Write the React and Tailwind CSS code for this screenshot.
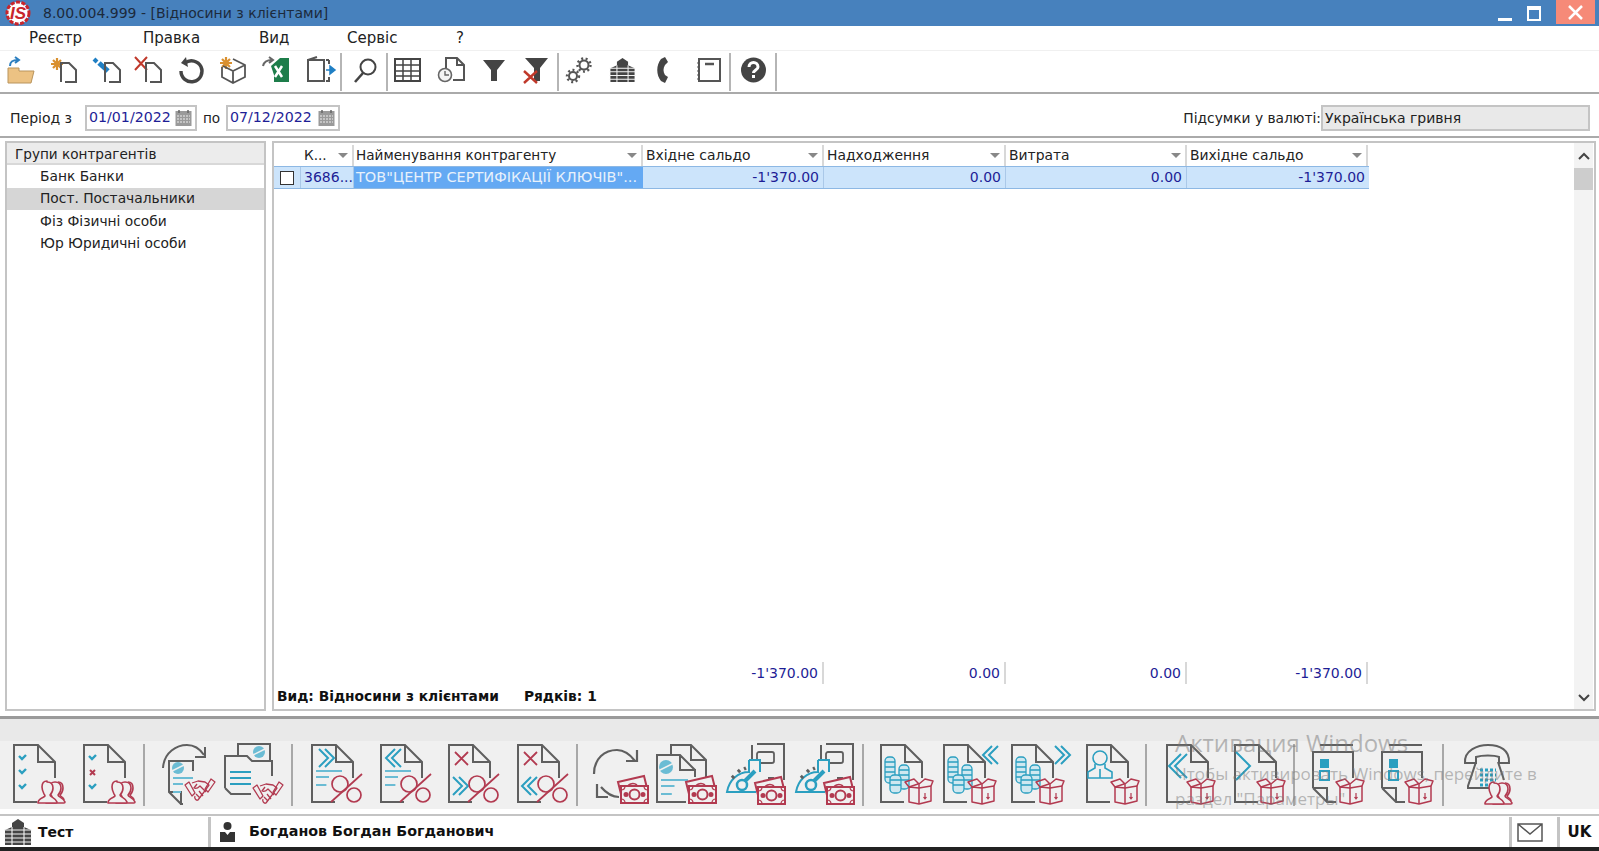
import React from 'react';

const G = '#5f5f5f';
const R = '#b23a50';
const B = '#2b9fc0';
const L = '#6bbcd4';

// shared svg pieces, drawn in pixels
const At = ({ x = 0, y = 0, children }) => <g transform={`translate(${x} ${y})`}>{children}</g>;

const Doc = ({ x, y }) => (
  <At x={x} y={y}>
    <path d="M24 58H1V1H25L42 18V34M25 1V18H42" fill="none" stroke={G} strokeWidth="2" />
  </At>
);

const Users = ({ x, y }) => (
  <At x={x} y={y}>
    <g fill="#f0f0f0" stroke={R} strokeWidth="1.600" strokeLinejoin="round">
      <path d="M20 1c3 0 5 2 5 6 0 3-1 5-3 7 0 2 4 2 4 5" />
      <path d="M17 1c4 0 6 2 6 6 0 3-1 5-3 7 0 2 6 3 7 7 0 1 0 1-1 1H8c0-4 5-5 6-6 0-1 0-1-1-2-1-2-2-5-2-7 0-4 3-6 6-6z" />
      <path d="M9 1c4 0 6 2 6 6 0 3-1 5-3 7 0 2 6 3 7 7 0 1 0 1-1 1H0c0-1 0-1 0-1 1-4 7-5 7-6 0-1 0-1-1-2-1-2-2-5-2-7 0-4 2-6 5-6z" />
    </g>
  </At>
);

const Tick = ({ x, y }) => <path d={`M${x} ${y}l3 3l4-4`} fill="none" stroke={B} strokeWidth="2.400" />;

const Box = ({ x, y }) => (
  <At x={x} y={y}>
    <g fill="none" stroke={R} strokeWidth="1.500" strokeLinejoin="round">
      <path d="M5 9V24L15 26L27 23V8L15 10Z" />
      <path d="M15 10V26M5 9L1 4L10 1L15 6L21 1L29 3L27 8M15 6L15 10M5 9L14 6" />
      <path d="M21 15v6M19.500 19l1.500 2l1.500-2" strokeWidth="1.200" />
    </g>
  </At>
);

const Money = ({ x, y }) => (
  <At x={x} y={y}>
    <g fill="#f0f0f0" stroke={R} strokeWidth="2">
      <path d="M0 6L26 0L29 12L3 18Z" />
      <path d="M9 13C9 8 15 6 19 9" fill="none" strokeWidth="1.600" />
      <rect x="3" y="10" width="27" height="17" />
      <circle cx="16.500" cy="18.500" r="5" />
      <circle cx="8" cy="18.500" r="1.500" fill={R} />
      <circle cx="25" cy="18.500" r="1.500" fill={R} />
      <path d="M3 14C5 14 7 13 7 10M30 14C28 14 26 13 26 10M3 23C5 23 7 24 7 27M30 23C28 23 26 24 26 27" fill="none" strokeWidth="1.200" />
    </g>
  </At>
);

const Hands = ({ x, y }) => (
  <At x={x} y={y}>
    <g fill="none" stroke={R} strokeWidth="1.300" strokeLinejoin="round">
      <path d="M0 8L7 19L10 16L4 5Z" />
      <path d="M26 2L20 12L23 15L30 5Z" />
      <path d="M7 6L13 4L20 5L24 8L19 15L13 23C11 24 9 21 10 19" />
      <path d="M12 7L9 11C11 12 13 11 15 9L21 15M11 17L15 21M14 14L18 19" />
    </g>
  </At>
);

const Percent = ({ x, y }) => (
  <At x={x} y={y}>
    <g fill="none" stroke={R} strokeWidth="1.700">
      <path d="M0 28L31 0" />
      <circle cx="9" cy="10" r="8" />
      <circle cx="23" cy="21" r="7" />
    </g>
  </At>
);

const TextLines = ({ x, y, w = 26 }) => (
  <At x={x} y={y}>
    <path d={`M0 1H${w}M0 7H${w / 2}M0 15H${w / 2.500}`} stroke={L} strokeWidth="2" fill="none" />
  </At>
);

const Chev = ({ x, y, left, double, h = 18, c = B }) => {
  const w = h / 2;
  const one = (o) => (left ? `M${o + w} 0L${o} ${h / 2}L${o + w} ${h}` : `M${o} 0L${o + w} ${h / 2}L${o} ${h}`);
  return (
    <At x={x} y={y}>
      <path d={one(0) + (double ? one(6) : '')} fill="none" stroke={c} strokeWidth="2" />
    </At>
  );
};

const Cross = ({ x, y }) => <path d={`M${x} ${y}l13 13M${x + 13} ${y}l-13 13`} stroke={R} strokeWidth="1.800" fill="none" />;

const Globe = ({ x, y, r = 6 }) => (
  <At x={x} y={y}>
    <circle r={r} fill={L} />
    <path d={`M${-r} ${r / 2}L${r} ${-r / 2}`} stroke="#f0f0f0" strokeWidth="1.500" />
  </At>
);

const Coins = ({ x, y }) => (
  <At x={x} y={y}>
    <g fill="#cfe8f0" stroke={B} strokeWidth="1.300">
      <rect x="0" y="0" width="10" height="26" rx="4" />
      <path d="M0 5h10M0 10h10M0 15h10M0 20h10" />
      <rect x="14" y="8" width="10" height="24" rx="4" />
      <path d="M14 13h10M14 18h10M14 23h10" />
      <rect x="5" y="18" width="11" height="18" rx="4" />
      <path d="M5 23h11M5 28h11" />
    </g>
  </At>
);

const Register = ({ x, y }) => (
  <At x={x} y={y}>
    <path d="M26 1V16M31 0H58V36M42 34H48" fill="none" stroke={G} strokeWidth="2" />
    <rect x="31" y="8" width="17" height="11" rx="2" fill="none" stroke={G} strokeWidth="1.800" />
    <path d="M23 16H34V28M23 16V28C12 28 3 36 1 48H30" fill="#f0f0f0" stroke={B} strokeWidth="2" />
    <circle cx="16" cy="41" r="5" fill="none" stroke={B} strokeWidth="2.500" />
    <path d="M19 37L29 27" stroke={B} strokeWidth="4" />
    <path d="M6 34l2-2M12 28l2-2M18 25l2-1" stroke={G} strokeWidth="3.400" />
  </At>
);

// bottom toolbar buttons, each one is w x 60 px
const Btn = ({ className, children }) => (
  <svg className={`h-[60px] shrink-0 overflow-visible ${className}`}>{children}</svg>
);

const BtnSep = ({ className }) => <div className={`w-[2px] h-[62px] bg-[#a8a8a8] shrink-0 ${className}`} />;

const BottomIcons = () => (
  <div className="flex items-start pl-[13px] pt-[3px] h-[68px] bg-[#f0f0f0]">
    <Btn className="w-[70px]">
      <Doc /><Tick x={6} y={12} /><Tick x={6} y={26} /><Tick x={6} y={41} /><Users x={25} y={37} />
    </Btn>
    <Btn className="w-[60px]">
      <Doc /><Tick x={6} y={12} /><path d="M7 26l5 5M12 26l-5 5" stroke={R} strokeWidth="2" /><Tick x={6} y={41} /><Users x={25} y={37} />
    </Btn>
    <BtnSep className="mr-[16px]" />
    <Btn className="w-[62px]">
      <path d="M2 24C3 8 16 1 26 1C34 1 39 5 43 11M44 3V13H34" fill="none" stroke={G} strokeWidth="2" />
      <path d="M20 60L8 48V17H32V27M8 48H20V60H22" fill="none" stroke={G} strokeWidth="2" />
      <Globe x={17} y={24} /><TextLines x={12} y={33} w={20} /><Hands x={24} y={33} />
    </Btn>
    <Btn className="w-[68px]">
      <path d="M15 12V0H47V16M2 44V12H24L29 17H49V32M2 44L8 50H28" fill="none" stroke={G} strokeWidth="2" />
      <Globe x={36} y={8} />
      <path d="M7 28H28M7 34H28M7 40H28" stroke={B} strokeWidth="2" />
      <Hands x={30} y={36} />
    </Btn>
    <BtnSep className="mr-[18px]" />
    <Btn className="w-[69px]">
      <Doc /><Chev x={8} y={5} double /><TextLines x={5} y={26} /><Percent x={20} y={30} />
    </Btn>
    <Btn className="w-[68px]">
      <Doc /><Chev x={6} y={5} left double /><TextLines x={5} y={26} /><Percent x={20} y={30} />
    </Btn>
    <Btn className="w-[69px]">
      <Doc /><Cross x={7} y={8} /><Chev x={5} y={33} double /><Percent x={20} y={30} />
    </Btn>
    <Btn className="w-[59px]">
      <Doc /><Cross x={7} y={8} /><Chev x={5} y={33} left double /><Percent x={20} y={30} />
    </Btn>
    <BtnSep className="mr-[15px]" />
    <Btn className="w-[63px]">
      <path d="M1 30C1 14 12 6 24 6C30 6 36 9 42 17M44 6V17H33M26 53C20 53 14 50 8 43M4 40V53H15" fill="none" stroke={G} strokeWidth="2.200" />
      <Money x={25} y={32} />
    </Btn>
    <Btn className="w-[69px]">
      <path d="M15 10V1H35L50 16V34M35 1V16H50" fill="none" stroke={G} strokeWidth="2" />
      <path d="M30 58H1V11H24L39 26M24 11V26H39V33" fill="#f0f0f0" stroke={G} strokeWidth="2" />
      <Globe x={10} y={23} r={7} /><TextLines x={5} y={35} w={27} /><Money x={30} y={32} />
    </Btn>
    <Btn className="w-[69px]">
      <Register x={1} y={0} /><Money x={30} y={33} />
    </Btn>
    <Btn className="w-[68px]">
      <Register x={1} y={0} /><Money x={30} y={33} />
    </Btn>
    <BtnSep className="mr-[16px]" />
    <Btn className="w-[63px]">
      <Doc /><Coins x={5} y={13} /><Box x={24} y={34} />
    </Btn>
    <Btn className="w-[68px]">
      <Doc /><Coins x={5} y={13} /><Chev x={40} y={2} left double /><Box x={24} y={34} />
    </Btn>
    <Btn className="w-[75px]">
      <Doc /><Coins x={5} y={13} /><Chev x={44} y={2} double /><Box x={24} y={34} />
    </Btn>
    <Btn className="w-[59px]">
      <Doc />
      <g fill="none" stroke={B} strokeWidth="1.600">
        <circle cx="14" cy="14" r="7" />
        <path d="M9 20V24L2 28V34H26V28L19 24V20M14 25V34" />
      </g>
      <Box x={24} y={34} />
    </Btn>
    <BtnSep className="mr-[19px]" />
    <Btn className="w-[68px]">
      <Doc /><Chev x={3} y={10} left double h={24} /><Box x={20} y={34} />
    </Btn>
    <Btn className="w-[59px]">
      <Doc /><Chev x={2} y={8} h={28} /><Box x={22} y={34} />
    </Btn>
    <BtnSep className="mr-[17px]" />
    <Btn className="w-[69px]">
      <path d="M1 44L15 58H24M1 44V8H41V34M1 44H15V58M8 1H41" fill="none" stroke={G} strokeWidth="2" />
      <rect x="8" y="15" width="9" height="9" fill={B} /><rect x="8" y="27" width="9" height="9" fill="none" stroke={B} strokeWidth="2" />
      <Box x={23} y={34} />
    </Btn>
    <Btn className="w-[61px]">
      <path d="M1 44L15 58H24M1 44V8H41V34M1 44H15V58M8 1H41" fill="none" stroke={G} strokeWidth="2" />
      <rect x="8" y="15" width="9" height="9" fill={B} /><rect x="8" y="27" width="9" height="9" fill="none" stroke={B} strokeWidth="2" />
      <Box x={23} y={34} />
    </Btn>
    <BtnSep className="mr-[20px]" />
    <Btn className="w-[56px]">
      <path d="M1 19C0 6 14 1 24 1C36 1 46 6 45 19H35V13C30 11 18 11 12 13V19Z" fill="none" stroke={G} strokeWidth="2" />
      <path d="M12 18L4 42V44H30M34 18L40 36" fill="none" stroke={G} strokeWidth="2" />
      <path d="M16 26h16M16 31h16M16 36h16M16 41h12" stroke={B} strokeWidth="3" strokeDasharray="3 2" />
      <Users x={21} y={38} />
    </Btn>
  </div>
);

// top toolbar
const Top = ({ className, children }) => (
  <svg className={`h-[26px] shrink-0 overflow-visible ${className}`}>{children}</svg>
);
const TopSep = ({ className }) => <div className={`w-[2px] h-[38px] -mt-[4px] bg-[#b5b5b5] shrink-0 ${className}`} />;

const PageSmall = ({ x, y }) => (
  <path transform={`translate(${x} ${y})`} d="M1 20V1H9L16 8V20H5" fill="none" stroke="#555" strokeWidth="2" />
);

const Star = ({ x, y }) => (
  <g transform={`translate(${x} ${y})`} stroke="#d9902f" strokeWidth="2.200">
    <path d="M0-6V6M-6 0H6M-4-4L4 4M4-4L-4 4" />
  </g>
);

const Gear = ({ x, y, r }) => (
  <g transform={`translate(${x} ${y})`}>
    <circle r={r} fill="none" stroke="#555" strokeWidth="2" />
    <circle r={r + 2} fill="none" stroke="#555" strokeWidth="2.400" strokeDasharray="2 2.500" />
  </g>
);

const Building = ({ className }) => (
  <svg className={className} viewBox="0 0 28 28">
    <path d="M14 1L20 5V9L27 12V27H1V12L8 9V5Z" fill="#444" />
    <path d="M0 12H28M0 16H28M0 20H28M0 24H28M8 9V27M20 9V27" stroke="#f4f4f4" strokeWidth="1.100" />
  </svg>
);

const TopIcons = () => (
  <div className="flex items-start pl-[7px] pt-[6px] h-[41px]">
    <Top className="w-[43px]">
      <path d="M1 11H12V14H27L24 26H1Z" fill="#ecc283" stroke="#b9945c" strokeWidth="1" />
      <path d="M3 9C3 4 6 3 11 3M8 0L12 3L8 6" fill="none" stroke="#2c7fc0" strokeWidth="2" />
    </Top>
    <Top className="w-[43px]"><Star x={7} y={7} /><PageSmall x={10} y={5} /></Top>
    <Top className="w-[41px]">
      <path d="M1 2L4 5" stroke="#1f7fc4" strokeWidth="4" />
      <path d="M6 6L15 14" stroke="#1f7fc4" strokeWidth="5" /><PageSmall x={11} y={5} />
    </Top>
    <Top className="w-[44px]">
      <path d="M1 0L13 13M13 0L1 13" stroke="#c0392b" strokeWidth="2" /><PageSmall x={11} y={5} />
    </Top>
    <Top className="w-[42px]">
      <path d="M7 6A10.500 10.500 0 1 1 3 14" fill="none" stroke="#444" strokeWidth="3.400" />
      <path d="M8 0L3 6L10 10Z" fill="#444" />
    </Top>
    <Top className="w-[42px]">
      <Star x={6} y={6} />
      <path d="M13 2L25 8V20L13 26L2 20V10M13 14L25 8M13 14V26M13 14L3 9" fill="none" stroke="#555" strokeWidth="1.800" />
    </Top>
    <Top className="w-[45px]">
      <path d="M1 9C2 4 6 3 10 3M7 0L11 3L7 6" fill="none" stroke="#666" strokeWidth="2" />
      <path d="M9 9L18 1H27V25H12V18Z" fill="#1d7d4a" />
      <path d="M13 9L20 20M20 9L13 20" stroke="#fff" strokeWidth="2.500" />
    </Top>
    <Top className="w-[33px]">
      <path d="M1 3H17V24H1ZM1 3L10 0M19 3H22M19 24H22V20M22 3V7" fill="none" stroke="#555" strokeWidth="2" />
      <path d="M19 13H25M23 9L28 13L23 17Z" fill="#1f7fc4" stroke="#1f7fc4" strokeWidth="1.500" />
    </Top>
    <TopSep className="mr-[11px]" />
    <Top className="w-[33px]">
      <circle cx="15" cy="10" r="7.500" fill="none" stroke="#444" strokeWidth="2" />
      <path d="M10 16L2 25" stroke="#444" strokeWidth="2.600" />
    </Top>
    <TopSep className="mr-[6px]" />
    <Top className="w-[43px]">
      <rect x="1" y="2" width="25" height="22" fill="none" stroke="#444" strokeWidth="2" />
      <path d="M1 8H26M1 14H26M1 19H26M9 2V24M17 2V24" stroke="#444" strokeWidth="1.500" />
    </Top>
    <Top className="w-[46px]">
      <path d="M9 11V1H20L27 8V23H16M20 1V8H27" fill="none" stroke="#555" strokeWidth="2" />
      <circle cx="8" cy="18" r="6.500" fill="#f4f4f4" stroke="#666" strokeWidth="1.600" />
      <path d="M8 14V18H12" fill="none" stroke="#666" strokeWidth="1.400" />
    </Top>
    <Top className="w-[40px]"><path d="M0 3H22L14 13V24H8V13Z" fill="#444" /></Top>
    <Top className="w-[34px]">
      <path d="M2 1H25L17 11V24H11V11Z" fill="#444" />
      <path d="M1 14L14 26M14 14L1 26" stroke="#c0392b" strokeWidth="2.400" />
    </Top>
    <TopSep className="mr-[7px]" />
    <Top className="w-[42px]"><Gear x={18} y={8} r={4.500} /><Gear x={7} y={19} r={4} /></Top>
    <Building className="w-[29px] h-[26px] shrink-0 mr-[19px]" />
    <Top className="w-[41px]">
      <path d="M9 0L5 2C0 8 0 18 5 24L9 26L12 20L9 18C7 15 7 11 9 8L12 5Z" fill="#444" />
    </Top>
    <Top className="w-[32px]">
      <rect x="2" y="2" width="21" height="22" fill="none" stroke="#555" strokeWidth="2" />
      <path d="M8 7H17" stroke="#555" strokeWidth="2.500" />
      <path d="M0 6H3M0 10H3M0 14H3M0 18H3M0 22H3" stroke="#555" strokeWidth="1" />
    </Top>
    <TopSep className="mr-[10px]" />
    <Top className="w-[34px]">
      <circle cx="12.500" cy="13" r="12.500" fill="#444" />
      <path d="M8 10C8 4 17 4 17 10C17 13 12.500 13 12.500 16" fill="none" stroke="#fff" strokeWidth="3" />
      <rect x="11" y="18" width="3" height="3" fill="#fff" />
    </Top>
    <TopSep />
  </div>
);

const Calendar = () => (
  <svg className="w-[17px] h-[17px] shrink-0" viewBox="0 0 17 17">
    <rect x="0.500" y="1" width="16" height="15" fill="#9a9a9a" />
    <path d="M4 0V3M13 0V3" stroke="#666" strokeWidth="1.500" />
    <path d="M2 6H15M2 9H15M2 12H15" stroke="#eee" strokeWidth="1" strokeDasharray="2 1" />
  </svg>
);

const DateBox = ({ value, className }) => (
  <div className={`flex items-center justify-between h-[26px] border-2 border-[#c4c4c4] pl-[2px] pr-[3px] text-[14.200px] text-[#1e1e96] ${className}`}>
    <span>{value}</span>
    <Calendar />
  </div>
);

const Sort = () => <span className="w-0 h-0 border-x-[5px] border-x-transparent border-t-[5px] border-t-[#888] shrink-0" />;

const columns = [
  { title: 'К...', width: 'w-[53px]', pad: 'pl-[3px] text-[13.600px]' },
  { title: 'Найменування контрагенту', width: 'w-[289px]', pad: 'pl-[2px] text-[13.600px]' },
  { title: 'Вхідне сальдо', width: 'w-[181px]', pad: 'pl-[3px] text-[13.900px]' },
  { title: 'Надходження', width: 'w-[182px]', pad: 'pl-[3px] text-[13.900px]' },
  { title: 'Витрата', width: 'w-[181px]', pad: 'pl-[3px] text-[13.900px]' },
  { title: 'Вихідне сальдо', width: 'w-[181px]', pad: 'pl-[3px] text-[13.900px]' },
];

const groups = [
  { name: 'Банк Банки' },
  { name: 'Пост. Постачальники', active: true },
  { name: 'Фіз Фізичні особи' },
  { name: 'Юр Юридичні особи' },
];

const totals = [
  { value: "-1'370.00", width: 'w-[181px]' },
  { value: '0.00', width: 'w-[182px]' },
  { value: '0.00', width: 'w-[181px]' },
  { value: "-1'370.00", width: 'w-[181px]' },
];

export default function App() {
  return (
    <div className="relative flex flex-col w-[1599px] h-[851px] bg-white overflow-hidden text-[13.600px] text-[#222] font-['DejaVu_Sans',sans-serif]">
      {/* Title bar */}
      <div className="flex items-center h-[26px] bg-[#4781bd] shrink-0">
        <svg className="w-[32px] h-[26px] ml-[2px] shrink-0" viewBox="0 0 32 26">
          <circle cx="16" cy="13" r="11" fill="#fff" stroke="#c8252c" strokeWidth="3" strokeDasharray="4 1.500" />
          <text x="16" y="19" textAnchor="middle" fontSize="17" fontWeight="700" fontStyle="italic" fill="#c8252c" fontFamily="Liberation Sans">IS</text>
        </svg>
        <span className="ml-[9px] text-[14px] text-[#1c2a3c]">8.00.004.999 - [Відносини з клієнтами]</span>
        <div className="ml-auto flex items-center">
          <span className="w-[14px] h-[3px] bg-white mt-[12px] mr-[15px]" />
          <span className="w-[14px] h-[15px] border-2 border-t-4 border-white mr-[15px]" />
          <span className="flex items-center justify-center w-[39px] h-[24px] bg-[#f68a78] mr-[4px] mb-[2px]">
            <svg className="w-[15px] h-[15px]" viewBox="0 0 15 15"><path d="M1 1L14 14M14 1L1 14" stroke="#fff" strokeWidth="2.500" /></svg>
          </span>
        </div>
      </div>

      {/* Menu */}
      <div className="flex items-center h-[25px] border-b border-[#f0f0f0] text-[15px] text-[#222] shrink-0">
        <span className="ml-[29px] w-[114px]">Реєстр</span>
        <span className="w-[116px]">Правка</span>
        <span className="w-[88px]">Вид</span>
        <span className="w-[109px]">Сервіс</span>
        <span>?</span>
      </div>

      {/* Toolbar */}
      <div className="h-[43px] border-b-2 border-[#aaa] shrink-0">
        <TopIcons />
      </div>

      {/* Period */}
      <div className="flex items-center h-[44px] pl-[10px] pr-[9px] pt-[6px] border-b-2 border-[#aaa] shrink-0">
        <span className="w-[75px] text-[14px]">Період з</span>
        <DateBox value="01/01/2022" className="w-[112px]" />
        <span className="w-[29px] text-center">по</span>
        <DateBox value="07/12/2022" className="w-[114px]" />
        <span className="ml-auto text-[13.800px]">Підсумки у валюті:</span>
        <div className="flex items-center w-[269px] h-[26px] border-2 border-[#c4c4c4] bg-[#e9e9e9] pl-[2px] text-[14px]">Українська гривня</div>
      </div>

      {/* Main */}
      <div className="flex gap-[6px] h-[570px] mt-[3px] px-[5px] shrink-0">
        <div className="w-[261px] border-2 border-[#c4c4c4] shrink-0">
          <div className="flex items-center h-[22px] pl-[8px] pt-[2px] bg-[#ececec] border-b-2 border-[#d8d8d8]">Групи контрагентів</div>
          {groups.map((group) => (
            <div key={group.name} className={`flex items-center h-[22.500px] pl-[33px] text-[13.800px] ${group.active ? 'bg-[#d6d6d6]' : ''}`}>
              {group.name}
            </div>
          ))}
        </div>

        <div className="flex flex-col relative flex-1 border-2 border-[#c4c4c4]">
          <div className="flex flex-1">
            <div className="flex flex-col w-[1300px]">
              {/* header */}
              <div className="flex h-[23px] pl-[27px] pt-[2px]">
                {columns.map((col) => (
                  <div key={col.title} className={`flex items-center justify-between pr-[4px] border-r-2 border-[#d8d8d8] ${col.pad} ${col.width}`}>
                    <span>{col.title}</span>
                    <Sort />
                  </div>
                ))}
              </div>
              {/* row */}
              <div className="flex h-[23px] bg-[#cce4fb] border-y border-[#8db8e4] text-[14px] text-[#1e1e96] w-[1095px]">
                <div className="flex items-center justify-center w-[27px] border-r border-[#aac8e8]">
                  <span className="w-[14px] h-[14px] border-[1.500px] border-[#333] bg-white" />
                </div>
                <div className="flex items-center w-[53px] pl-[3px] border-r border-[#aac8e8]">3686...</div>
                <div className="flex items-center w-[289px] pl-[2px] bg-[#64a9f3] text-[14.500px] text-[#e8f1fb] whitespace-nowrap overflow-hidden">ТОВ"ЦЕНТР СЕРТИФІКАЦІЇ КЛЮЧІВ"...</div>
                <div className="flex items-center justify-end w-[181px] pr-[4px] border-r border-[#aac8e8]">-1'370.00</div>
                <div className="flex items-center justify-end w-[182px] pr-[4px] border-r border-[#aac8e8]">0.00</div>
                <div className="flex items-center justify-end w-[181px] pr-[4px] border-r border-[#aac8e8]">0.00</div>
                <div className="flex items-center justify-end flex-1 pr-[4px]">-1'370.00</div>
              </div>
              <div className="flex-1" />
              {/* totals */}
              <div className="flex h-[22px] pl-[369px] text-[14px] text-[#1e1e96]">
                {totals.map((total, index) => (
                  <div key={index} className={`flex items-center justify-end pr-[4px] border-r-2 border-[#d8d8d8] ${total.width}`}>
                    {total.value}
                  </div>
                ))}
              </div>
              <div className="flex items-center h-[25px] pl-[3px] text-[13.800px] font-bold text-[#111] gap-[25px]">
                <span>Вид: Відносини з клієнтами</span>
                <span>Рядків: 1</span>
              </div>
            </div>
            {/* scrollbar */}
            <div className="flex flex-col w-[19px] ml-auto mr-[1px] bg-[#f3f3f3]">
              <div className="flex items-center justify-center h-[25px] text-[#444]">
                <svg className="w-[12px] h-[8px]" viewBox="0 0 12 8"><path d="M1 7L6 2L11 7" fill="none" stroke="#444" strokeWidth="2" /></svg>
              </div>
              <div className="h-[22px] bg-[#cdcdcd]" />
              <div className="flex-1" />
              <div className="flex items-center justify-center h-[23px]">
                <svg className="w-[12px] h-[8px]" viewBox="0 0 12 8"><path d="M1 1L6 6L11 1" fill="none" stroke="#444" strokeWidth="2" /></svg>
              </div>
            </div>
          </div>
        </div>
      </div>

      {/* Bottom toolbar */}
      <div className="mt-[5px] border-t-[3px] border-[#9a9a9a] shrink-0">
        <div className="h-[22px] bg-[#e9e9e9]" />
        <BottomIcons />
      </div>

      {/* Status bar */}
      <div className="flex h-[33px] mt-[5px] pt-[1px] border-t-2 border-[#c4c4c4] text-[14px] font-bold text-[#111] shrink-0">
        <div className="flex items-center w-[211px] pl-[4px] gap-[6px] border-r-[3px] border-[#c4c4c4]">
          <Building className="w-[28px] h-[28px]" />
          <span>Тест</span>
        </div>
        <div className="flex items-center flex-1 pl-[9px] gap-[14px] text-[14.300px]">
          <svg className="w-[15px] h-[20px]" viewBox="0 0 15 20">
            <circle cx="7.500" cy="4" r="4" fill="#333" />
            <path d="M0 10H5L7.500 13L10 10H15V20H0Z" fill="#333" />
          </svg>
          <span>Богданов Богдан Богданович</span>
        </div>
        <div className="flex items-center pl-[5px] w-[51px] border-x-[3px] border-[#c4c4c4]">
          <svg className="w-[26px] h-[19px]" viewBox="0 0 26 19"><path d="M1 1H25V18H1ZM1 1L13 11L25 1" fill="none" stroke="#555" strokeWidth="1.500" /></svg>
        </div>
        <div className="flex items-center justify-center w-[39px] text-[15px]">UK</div>
      </div>
      <div className="flex-1 bg-[#222]" />

      {/* Windows activation watermark */}
      <div className="absolute left-[1175px] top-[728px] text-[#787878]/50 pointer-events-none font-['Open_Sans',sans-serif]">
        <div className="text-[24px] leading-[30px]">Активация Windows</div>
        <div className="text-[17px] leading-[25px] mt-[3px] whitespace-nowrap">Чтобы активировать Windows, перейдите в</div>
        <div className="text-[17px] leading-[25px]">раздел "Параметры"</div>
      </div>
    </div>
  );
}
